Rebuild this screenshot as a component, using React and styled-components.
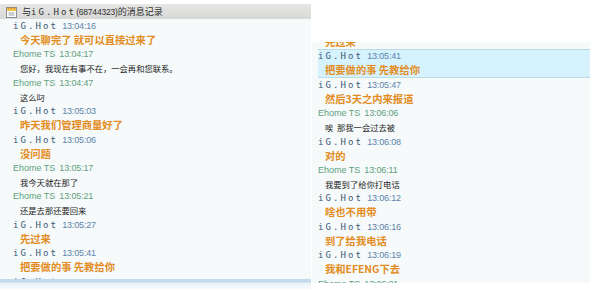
import React from "react";
import styled, { createGlobalStyle, css } from "styled-components";

const Global = createGlobalStyle`
  html, body { margin: 0; padding: 0; background: #ffffff; }
  body { font-family: "Liberation Sans", "Noto Sans CJK SC", sans-serif; }
`;

const Page = styled.div`
  width: 600px;
  height: 289px;
  display: flex;
  align-items: flex-start;
  background: #ffffff;
  overflow: hidden;
`;

const LeftPanel = styled.div`
  width: 311px;
  height: 289px;
  display: flex;
  flex-direction: column;
  padding-top: 4px;
  box-sizing: border-box;
`;

const TitleBar = styled.div`
  height: 15px;
  flex: none;
  display: flex;
  align-items: center;
  gap: 5px;
  padding-left: 6px;
  background: linear-gradient(#e6e6e4, #d8d8d6);
  font-size: 9px;
  color: #2e2e2e;
  white-space: nowrap;
  overflow: hidden;
`;

const TitleText = styled.span`
  display: flex;
  align-items: center;
  font-family: "Noto Sans CJK SC", sans-serif;
  font-size: 9px;
`;

const Condensed = styled.span`
  font-family: "Liberation Sans", sans-serif;
  font-size: 8.5px;
  letter-spacing: -0.2px;
`;

const Log = styled.div`
  flex: 1;
  overflow: hidden;
  background: #f6fafa;
  padding-left: ${(p) => p.$pad}px;
`;

const Footer = styled.div`
  height: 10px;
  flex: none;
  background: linear-gradient(#c4d9ee 0, #c4d9ee 3px, #e9f1f8 4px, #f7fafc 100%);
`;

const RightPanel = styled.div`
  width: 278px;
  height: 241px;
  margin-top: 42px;
  margin-left: 1px;
  background: #f7fbfb;
  overflow: hidden;
`;

const Entry = styled.div`
  ${(p) =>
    p.$active &&
    css`
      background: #d5f2fd;
      box-shadow: inset 0 1px 0 #b8dbe8, inset 0 -1px 0 #b8dbe8;
    `}
`;

const Head = styled.div`
  height: 14px;
  line-height: 14px;
  display: flex;
  align-items: center;
  gap: 4px;
  white-space: nowrap;
  font-size: 9px;
`;

const Name = styled.span`
  font-family: ${(p) =>
    p.$spaced ? '"DejaVu Sans Mono", monospace' : '"Liberation Sans", sans-serif'};
  letter-spacing: ${(p) => (p.$spaced ? "2.1px" : "0")};
  font-size: 9px;
  color: ${(p) => (p.$spaced ? "#3b5878" : "#5f9f80")};
`;

const Time = styled.span`
  font-family: "Liberation Sans", sans-serif;
  font-size: 9px;
  letter-spacing: -0.15px;
  color: ${(p) => (p.$green ? "#5f9f80" : "#5c84ad")};
`;

const Body = styled.div`
  height: 14.4px;
  line-height: 14.4px;
  padding-left: 7px;
  white-space: pre;
  font-family: "Noto Sans CJK SC", sans-serif;
  ${(p) =>
    p.$bold
      ? css`
          font-size: 10.3px;
          font-weight: 700;
          color: #e38c22;
        `
      : css`
          font-size: 8.3px;
          color: #1c1c1c;
        `}
`;

const CutLine = styled(Body)`
  margin-top: -7px;
`;

const NoteIcon = () => (
  <svg width="11" height="12" viewBox="0 0 11 12">
    <rect x="0.5" y="1.5" width="10" height="10" fill="#fbfbfb" stroke="#8a8f99" />
    <rect x="1" y="2" width="9" height="3" fill="#f2c14a" />
    <path d="M2 1h1v2H2zM5 1h1v2H5zM8 1h1v2H8z" fill="#c9822a" />
    <path d="M2.5 7h6M2.5 9h6" stroke="#9aa2ad" strokeWidth="1" />
  </svg>
);

const leftData = [
  { ig: true, time: "13:04:16", text: "今天聊完了 就可以直接过来了" },
  { ig: false, time: "13:04:17", text: "您好，我现在有事不在，一会再和您联系。" },
  { ig: false, time: "13:04:47", text: "这么叼" },
  { ig: true, time: "13:05:03", text: "昨天我们管理商量好了" },
  { ig: true, time: "13:05:06", text: "没问题" },
  { ig: false, time: "13:05:17", text: "我今天就在那了" },
  { ig: false, time: "13:05:21", text: "还是去那还要回来" },
  { ig: true, time: "13:05:27", text: "先过来" },
  { ig: true, time: "13:05:41", text: "把要做的事 先教给你" },
  { ig: true, time: "13:05:47", text: "然后3天之内来报道" },
];

const rightData = [
  { ig: true, time: "13:05:41", text: "把要做的事 先教给你", active: true },
  { ig: true, time: "13:05:47", text: "然后3天之内来报道" },
  { ig: false, time: "13:06:06", text: "唉  那我一会过去被" },
  { ig: true, time: "13:06:08", text: "对的" },
  { ig: false, time: "13:06:11", text: "我要到了给你打电话" },
  { ig: true, time: "13:06:12", text: "啥也不用带" },
  { ig: true, time: "13:06:16", text: "到了给我电话" },
  { ig: true, time: "13:06:19", text: "我和EFENG下去" },
  { ig: false, time: "13:06:21", text: "好的" },
];

const Message = ({ ig, time, text, active }) => (
  <Entry $active={active}>
    <Head>
      <Name $spaced={ig}>{ig ? "iG.Hot" : "Ehome TS"}</Name>
      <Time $green={!ig}>{time}</Time>
    </Head>
    <Body $bold={ig}>{text}</Body>
  </Entry>
);

export default function App() {
  return (
    <>
      <Global />
      <Page>
        <LeftPanel>
          <TitleBar>
            <NoteIcon />
            <TitleText>
              与 <Name $spaced style={{ color: "#2e2e2e" }}>iG.Hot</Name>
              <Condensed>(68744323)</Condensed>的消息记录
            </TitleText>
          </TitleBar>
          <Log $pad={13}>
            {leftData.map((m, i) => (
              <Message key={i} {...m} />
            ))}
          </Log>
          <Footer />
        </LeftPanel>
        <RightPanel>
          <Log $pad={6}>
            <CutLine $bold>先过来</CutLine>
            {rightData.map((m, i) => (
              <Message key={i} {...m} />
            ))}
          </Log>
        </RightPanel>
      </Page>
    </>
  );
}
